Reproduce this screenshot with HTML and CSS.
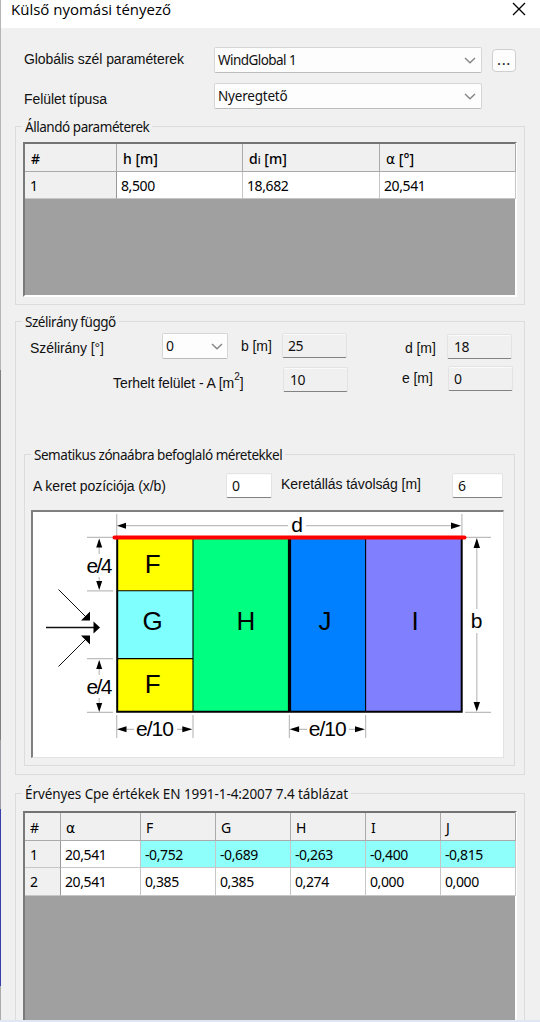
FILE: index.html
```html
<!DOCTYPE html>
<html lang="hu">
<head>
<meta charset="utf-8">
<title>Külső nyomási tényező</title>
<link rel="stylesheet" href="styles.css">
</head>
<body>
<main class="dialog">
  <header class="titlebar">
    <h1 class="title">Külső nyomási tényező</h1>
    <svg class="close" width="14" height="14" viewBox="0 0 14 14"><path d="M1 1L13 13M13 1L1 13"/></svg>
  </header>

  <section class="form">
    <div class="row row-global">
      <span class="label label-global">Globális szél paraméterek</span>
      <div class="combo combo-wide"><span class="wide-value">WindGlobal 1</span><svg class="chevron" width="12" height="7" viewBox="0 0 12 7"><path d="M1 1L6 5.7L11 1"/></svg></div>
      <button class="more">...</button>
    </div>
    <div class="row row-type">
      <span class="label label-type">Felület típusa</span>
      <div class="combo combo-wide"><span class="type-value">Nyeregtető</span><svg class="chevron" width="12" height="7" viewBox="0 0 12 7"><path d="M1 1L6 5.7L11 1"/></svg></div>
    </div>
  </section>

  <section class="group constants">
    <h2 class="caption">Állandó paraméterek</h2>
    <div class="grid grid-constants">
      <div class="cells">
        <span class="cell head">#</span><span class="cell head">h [m]</span><span class="cell head">d<small>i</small> [m]</span><span class="cell head"><i class="alpha">α</i> [°]</span>
        <span class="cell rowhead">1</span><span class="cell">8,500</span><span class="cell">18,682</span><span class="cell">20,541</span>
      </div>
    </div>
  </section>

  <section class="group wind">
    <h2 class="caption">Szélirány függő</h2>
    <div class="row row-direction">
      <span class="label label-direction">Szélirány [°]</span>
      <div class="combo combo-small"><span>0</span><svg class="chevron" width="12" height="7" viewBox="0 0 12 7"><path d="M1 1L6 5.7L11 1"/></svg></div>
      <span class="label label-b">b [m]</span>
      <span class="field">25</span>
      <span class="label label-d">d [m]</span>
      <span class="field field-d">18</span>
    </div>
    <div class="row row-area">
      <span class="label label-area">Terhelt felület - A [m<sup>2</sup>]</span>
      <span class="field field-area">10</span>
      <span class="label label-e">e [m]</span>
      <span class="field field-e">0</span>
    </div>

    <section class="group schema">
      <h2 class="caption">Sematikus zónaábra befoglaló méretekkel</h2>
      <div class="row row-frame">
        <span class="label label-position">A keret pozíciója (x/b)</span>
        <span class="field editable field-position">0</span>
        <span class="label label-distance">Keretállás távolság [m]</span>
        <span class="field editable field-distance">6</span>
      </div>
      <div class="picture">
        <svg class="diagram" width="470" height="245" viewBox="33 512 470 245">
          <!-- zones -->
          <g shape-rendering="crispEdges">
            <rect x="118" y="538" width="75" height="53" fill="#ff0"/>
            <rect x="118" y="591" width="75" height="68" fill="#80ffff"/>
            <rect x="118" y="659" width="75" height="52" fill="#ff0"/>
            <rect x="193" y="538" width="96" height="173" fill="#00ff80"/>
            <rect x="289" y="538" width="77" height="173" fill="#0080ff"/>
            <rect x="366" y="538" width="96" height="173" fill="#8080ff"/>
          </g>
          <g fill="none" stroke="#000">
            <path d="M117.2 537V711.7H461.7V537" stroke-width="2"/>
            <path d="M118 590.8H193M118 658.6H193M193 538V711M365.6 538V711" stroke-width="1.1"/>
            <path d="M289.5 538V711" stroke-width="3.2"/>
          </g>
          <!-- dimension lines -->
          <g fill="none" stroke="#bdbdbd" stroke-width="1.2">
            <path d="M116.7 514V536M461.9 514V536M120 525.7H288M306 525.7H458"/>
            <path d="M87 537.3H113M87 590.8H113M87 658.6H113M87 712.3H113"/>
            <path d="M99.2 540V554M99.2 577V588M99.2 661V675M99.2 698V709"/>
            <path d="M465 537.3H491M465 712.3H491M476.8 540V609M476.8 633V709"/>
            <path d="M116.7 715V738M193 715V738M289.4 715V738M365.6 715V738"/>
            <path d="M120 729.3H134M177 729.3H189M293 729.3H307M349 729.3H362"/>
          </g>
          <g fill="#000">
            <path d="M117 525.7l9-3v6zM461 525.7l-10-3.2v6.4z"/>
            <path d="M99.2 538.5l-3 9h6zM99.2 590l-3-9h6zM99.2 660l-3 9h6zM99.2 712l-3-9h6z"/>
            <path d="M476.8 538l-3.2 10h6.4zM476.8 711.5l-3.2-9.5h6.4z"/>
            <path d="M117 729.3l9.5-3v6zM192.3 729.3l-10-3v6zM289.6 729.3l9.5-3v6zM365 729.3l-10-3v6z"/>
          </g>
          <!-- wind arrows -->
          <g fill="none" stroke="#111">
            <path d="M58.5 589.5L86 617M58.5 666.5L86 639" stroke-width="1"/>
            <path d="M46 627.5H95" stroke-width="1.5"/>
          </g>
          <path d="M90 611.5v9h-9zM90 644.5v-9h-9zM100 627.5l-6.5-6v12z"/>
          <path d="M114.5 537.4H464.5" stroke="#f00" stroke-width="4" stroke-linecap="round"/>
          <g class="zone-name">
            <text x="152.7" y="573">F</text><text x="152.5" y="630">G</text><text x="152.7" y="693">F</text>
            <text x="246" y="630">H</text><text x="325" y="630">J</text><text x="415" y="630">I</text>
          </g>
          <g class="dim-name">
            <text x="297" y="532">d</text><text x="476.5" y="628">b</text>
            <text x="99.5" y="573" textLength="26">e/4</text><text x="99.5" y="694" textLength="26">e/4</text>
            <text x="155" y="736" textLength="38">e/10</text><text x="327.7" y="736" textLength="38">e/10</text>
          </g>
        </svg>
      </div>
    </section>
  </section>

  <section class="group results">
    <h2 class="caption cap-results">Érvényes Cpe értékek EN 1991-1-4:2007 7.4 táblázat</h2>
    <div class="grid grid-results">
      <div class="cells">
        <span class="cell head">#</span><span class="cell head"><i class="alpha">α</i></span><span class="cell head">F</span><span class="cell head">G</span><span class="cell head">H</span><span class="cell head">I</span><span class="cell head">J</span>
        <span class="cell rowhead">1</span><span class="cell">20,541</span><span class="cell active">-0,752</span><span class="cell active">-0,689</span><span class="cell active">-0,263</span><span class="cell active">-0,400</span><span class="cell active">-0,815</span>
        <span class="cell rowhead">2</span><span class="cell">20,541</span><span class="cell">0,385</span><span class="cell">0,385</span><span class="cell">0,274</span><span class="cell">0,000</span><span class="cell">0,000</span>
      </div>
    </div>
  </section>
</main>
</body>
</html>
```
FILE: styles.css
```css
* { box-sizing: border-box; }
body {
  margin: 0;
  width: 540px;
  height: 1022px;
  overflow: hidden;
  padding: 0 0 2px 1px;
  background: linear-gradient(#dfe7f2, #dfe7f2) 0 100% / 100% 2px no-repeat,
    linear-gradient(#b5b5b5 0 370px, #808080 370px 740px, #a09aa5 740px 809px, #3b3fae 809px 986px, #aaa 986px);
  font: 14px/18px "Noto Sans", "Open Sans", sans-serif;
  color: #111;
}
h1, h2 { margin: 0; font-weight: 400; }
.dialog { display: flex; flex-direction: column; height: 1020px; overflow: hidden; background: #f0f0f0; }

.titlebar { display: flex; justify-content: space-between; height: 28px; padding: 0 14px 0 10px; background: #fff; flex: none; }
.title { font: 15px/19px "Open Sans", "Noto Sans", sans-serif; color: #000; letter-spacing: 0; white-space: nowrap; }
.close { margin-top: 2px; }
.close path { stroke: #000; stroke-width: 1.3; fill: none; }

.row { display: flex; align-items: flex-start; }
.label { flex: none; font: 14px/18px "Liberation Sans", Arial, sans-serif; white-space: nowrap; letter-spacing: -0.08px; }
.form { height: 98px; flex: none; padding: 19px 0 0 22px; }
.row-global { height: 36px; }
.label-global, .label-type { width: 191px; padding-left: 1px; }
.label-global { padding-top: 3px; }
.label-type { padding-top: 7px; }

.combo {
  display: flex; align-items: center; justify-content: space-between; flex: none;
  height: 26px; padding: 0 5px 0 3px;
  background: #fdfdfd; border: 1px solid #d6d6d6; border-bottom-color: #bcbcbc; border-radius: 2px;
}
.combo-wide { width: 268px; font-size: 13.5px; }
.wide-value { letter-spacing: -0.55px; }
.type-value { letter-spacing: -0.2px; }
.combo-small { width: 66px; padding-left: 3px; padding-right: 4px; }
.chevron path { fill: none; stroke: #858585; stroke-width: 1.4; }
.more {
  width: 24px; height: 23px; margin: 2px 0 0 10px; padding: 0 0 3px;
  background: #fdfdfd; border: 1px solid #cfcfcf; border-radius: 4px;
  font: 15px/18px "Noto Sans", sans-serif; color: #222; letter-spacing: 0.6px;
}

.group { flex: none; border: 1px solid #dcdcdc; margin: 0 15px 0 14px; }
.caption { width: max-content; height: 18px; margin: -9px 0 0 6px; padding: 0 3px; background: #f0f0f0; font: 13.5px/19px "Noto Sans", "Open Sans", sans-serif; letter-spacing: -0.46px; white-space: nowrap; }
.cap-results { letter-spacing: -0.08px; }
.constants { height: 179px; margin-bottom: 16px; }
.wind { height: 454px; margin-bottom: 18px; }
.results { height: 260px; }

.grid { background: #a0a0a0; border: 2px solid #fff; border-top-color: #737373; border-left-color: #7a7a7a; margin: 6px 7px 0 7px; }
.grid-constants { height: 155px; }
.grid-results { height: 240px; margin-top: 8px; }
.cells { display: grid; }
.grid-constants .cells { grid-template-columns: 92px 126px 137px 136px; grid-template-rows: 28px 27px; }
.grid-results .cells { grid-template-columns: 36px 80px 75px 75px 75px 75px 75px; grid-template-rows: 28px 27px 28px; }
.cell { padding: 4px 0 0 4px; background: #fff; border-right: 1px solid #c6c6c6; border-bottom: 1px solid #c6c6c6; line-height: 19px; letter-spacing: -0.4px; color: #000; white-space: nowrap; }
.head { padding: 5px 0 0 6px; background: #f0f0f0; border-color: #aaa; font-weight: 500; letter-spacing: 0; }
.grid-results .head { padding: 5px 0 0 5px; font-weight: 400; }
.rowhead { padding-left: 5px; background: #f0f0f0; border-right-color: #999; }
.active { background: #8ffffb; }
.head small { font-size: 11px; }
.alpha { font: normal 14px/14px "DejaVu Sans", sans-serif; }

.row-direction { height: 33px; margin-top: 2px; padding-left: 14px; }
.label-direction { width: 132px; padding-top: 6px; }
.label-b { width: 41px; margin-left: 13px; padding-top: 4px; }
.label-d { width: 42px; margin-left: 58px; padding-top: 6px; }
.label-e { width: 46px; margin-left: 54px; padding-top: 3px; }
.label-area { width: 170px; padding-top: 8px; }
.label sup { position: relative; top: -8px; font-size: 10px; line-height: 0; vertical-align: baseline; }
.field { flex: none; width: 65px; height: 25px; padding: 3px 0 0 5px; border: 1px solid #e3e3e3; border-bottom: 1px solid #828282; border-radius: 2px; background: #f0f0f0; box-shadow: inset 0 1px #fafafa; line-height: 18px; letter-spacing: -0.5px; }
.field-d { margin-top: 1px; padding-left: 6px; }
.field-area { margin-top: 1px; padding-left: 6px; }
.row-area { padding-left: 97px; height: 88px; }
.editable { background: #fff; }
.field-position { width: 46px; }
.field-distance { width: 51px; }

.schema { height: 312px; margin: 0 9px 0 8px; }
.row-frame { margin: 9px 0 0 8px; height: 37px; }
.label-position { width: 193px; padding-top: 4px; }
.label-distance { width: 171px; margin-left: 9px; padding-top: 2px; }
.picture { width: 473px; height: 248px; margin: 0 0 0 6px; background: #fff; border: 2px solid #808080; border-right: 1px solid #e3e3e3; border-bottom: 1px solid #e3e3e3; }
.diagram { display: block; }
.zone-name { font: 26px "Liberation Sans", Arial, sans-serif; text-anchor: middle; }
.dim-name { font: 21px "Liberation Sans", Arial, sans-serif; text-anchor: middle; }
```
